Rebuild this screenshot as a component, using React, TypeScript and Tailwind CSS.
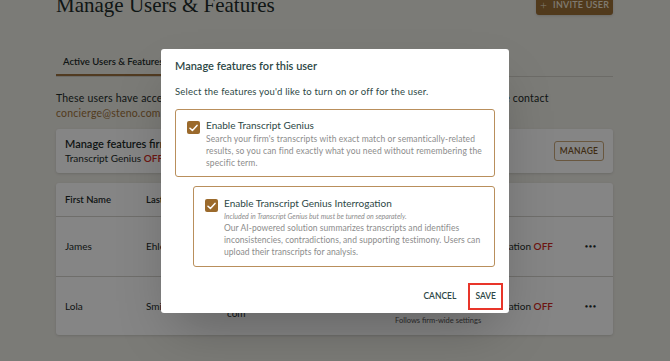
import React from 'react';

const FONT = { fontFamily: 'Lato, "Open Sans", sans-serif' };

const CheckBox: React.FC = () => (
  <span className="mt-[2px] flex h-[13px] w-[13px] flex-shrink-0 items-center justify-center rounded-[2px] bg-[#9b6a2c]">
    <svg width="9" height="8" viewBox="0 0 9 8" fill="none">
      <path d="M1 4.2 L3.4 6.4 L8 1.4" stroke="white" strokeWidth="1.5" strokeLinecap="round" strokeLinejoin="round" />
    </svg>
  </span>
);

const rows = [
  { first: 'James', last: 'Ehlers', email: 'james.ehlers@steno.', tail: 'com', sub: '' },
  { first: 'Lola', last: 'Smith', email: 'lola.smith@steno.', tail: 'com', sub: 'Follows firm-wide settings' },
];

export default function App() {
  return (
    <div className="relative min-h-screen overflow-hidden bg-[#ecebe4] text-[#1d2b2a]" style={FONT}>
      <div className="px-[56px] pr-[57px]">
        <div className="flex items-start justify-between">
          <h1 className="-mt-[9px] text-[21px] leading-[28px] text-[#1d2b2a]" style={{ fontFamily: '"Liberation Serif", serif' }}>
            Manage Users &amp; Features
          </h1>
          <button className="-mt-[6px] flex h-[21px] w-[77px] items-center justify-center gap-[6px] rounded-[3px] bg-[#9c6f37] text-[9px] font-semibold uppercase tracking-wide text-[#f4ead9] shadow">
            <span className="text-[12px] font-light leading-none">+</span>
            Invite User
          </button>
        </div>

        <div className="mt-[36px] flex border-b border-[#cfcdc6]">
          <div className="border-b-2 border-[#9c7240] px-[7px] pb-[5px] text-[9.5px] font-semibold">
            Active Users &amp; Features
          </div>
        </div>

        <p className="mt-[14px] text-[10.5px] leading-[15px] tracking-[0.2px]">
          These users have access to features enabled for your firm. To change firm-wide settings, please contact
          <br />
          <span className="text-[#a0733a]">concierge@steno.com</span> or <span className="text-[#a0733a]">888-707-8366</span>.
        </p>

        <div className="mt-[8px] flex items-center justify-between rounded-[3px] bg-white px-[9px] py-[8px] shadow">
          <div>
            <div className="text-[11px] font-semibold leading-[14px]">Manage features firm-wide</div>
            <div className="text-[10px] leading-[14px]">
              Transcript Genius <span className="font-semibold text-[#d22b25]">OFF</span>
            </div>
          </div>
          <button className="flex h-[20px] w-[50px] items-center justify-center rounded-[3px] border border-[#c9a77a] text-[8.5px] font-semibold tracking-wide text-[#7a5426]">
            MANAGE
          </button>
        </div>

        <div className="mt-[10px] rounded-[3px] bg-white shadow">
          <div className="grid h-[34px] grid-cols-[81px_81px_168px_1fr_40px] items-center border-b border-[#d5d3cd] px-[9px] text-[9.5px] font-semibold">
            <span>First Name</span>
            <span>Last Name</span>
            <span>Email</span>
            <span>Features</span>
            <span />
          </div>
          {rows.map((r, i) => (
            <div
              key={r.first}
              className={`grid grid-cols-[81px_81px_168px_1fr_40px] items-center px-[9px] text-[10px] ${i === 0 ? 'h-[60px] border-b border-[#d5d3cd]' : 'h-[58px]'}`}
            >
              <span>{r.first}</span>
              <span>{r.last}</span>
              <span className="pt-[1px] leading-[13px]">
                {r.email}
                <br />
                {r.tail}
              </span>
              <div className="relative">
                <span>
                  Transcript Genius Interrogation <span className="font-semibold text-[#d22b25]">OFF</span>
                </span>
                {r.sub && <div className="absolute left-0 top-[16px] text-[7.5px] text-[#555]">{r.sub}</div>}
              </div>
              <span className="pr-[7px] text-right text-[5px] tracking-[1px]">●●●</span>
            </div>
          ))}
        </div>
      </div>

      <div className="absolute inset-0 bg-black/[0.48]" />

      <div className="absolute left-[161px] top-[49px] w-[348px] rounded-[3px] bg-white px-[14px] pb-[3px] pt-[10px] text-[#2d4846] shadow-2xl">
        <h2 className="text-[11px] font-semibold leading-[14px]">Manage features for this user</h2>
        <p className="mt-[13px] text-[9.5px] leading-[12px] tracking-[0.2px]">Select the features you'd like to turn on or off for the user.</p>

        <div className="mt-[11px] flex gap-[6px] rounded-[3px] border-[1.5px] border-[#b98f5c] px-[11px] pb-[7px] pt-[9px]">
          <CheckBox />
          <div>
            <div className="text-[10px] leading-[13px]">Enable Transcript Genius</div>
            <p className="mt-[1px] text-[8.5px] leading-[12px] tracking-[0.12px] text-[#8c8c8c]">
              Search your firm's transcripts with exact match or semantically-related results, so you can find exactly what you need without remembering the specific term.
            </p>
          </div>
        </div>

        <div className="ml-[18px] mt-[9px] flex gap-[6px] rounded-[3px] border-[1.5px] border-[#b98f5c] px-[11px] pb-[8px] pt-[10px]">
          <CheckBox />
          <div>
            <div className="text-[10px] leading-[13px]">Enable Transcript Genius Interrogation</div>
            <p className="text-[7px] italic leading-[12px] text-[#8c8c8c]">Included in Transcript Genius but must be turned on separately.</p>
            <p className="text-[8.5px] leading-[12px] tracking-[0.05px] text-[#8c8c8c]">
              Our AI-powered solution summarizes transcripts and identifies inconsistencies, contradictions, and supporting testimony. Users can upload their transcripts for analysis.
            </p>
          </div>
        </div>

        <div className="mt-[16px] flex items-center justify-end gap-[10px]">
          <button className="px-[2px] py-[5px] text-[8.5px] font-semibold text-[#2d4846]">CANCEL</button>
          <button className="-mr-[8px] border-2 border-[#e8352a] px-[5px] py-[5px] text-[8.5px] font-semibold text-[#2d4846]">
            SAVE
          </button>
        </div>
      </div>
    </div>
  );
}
